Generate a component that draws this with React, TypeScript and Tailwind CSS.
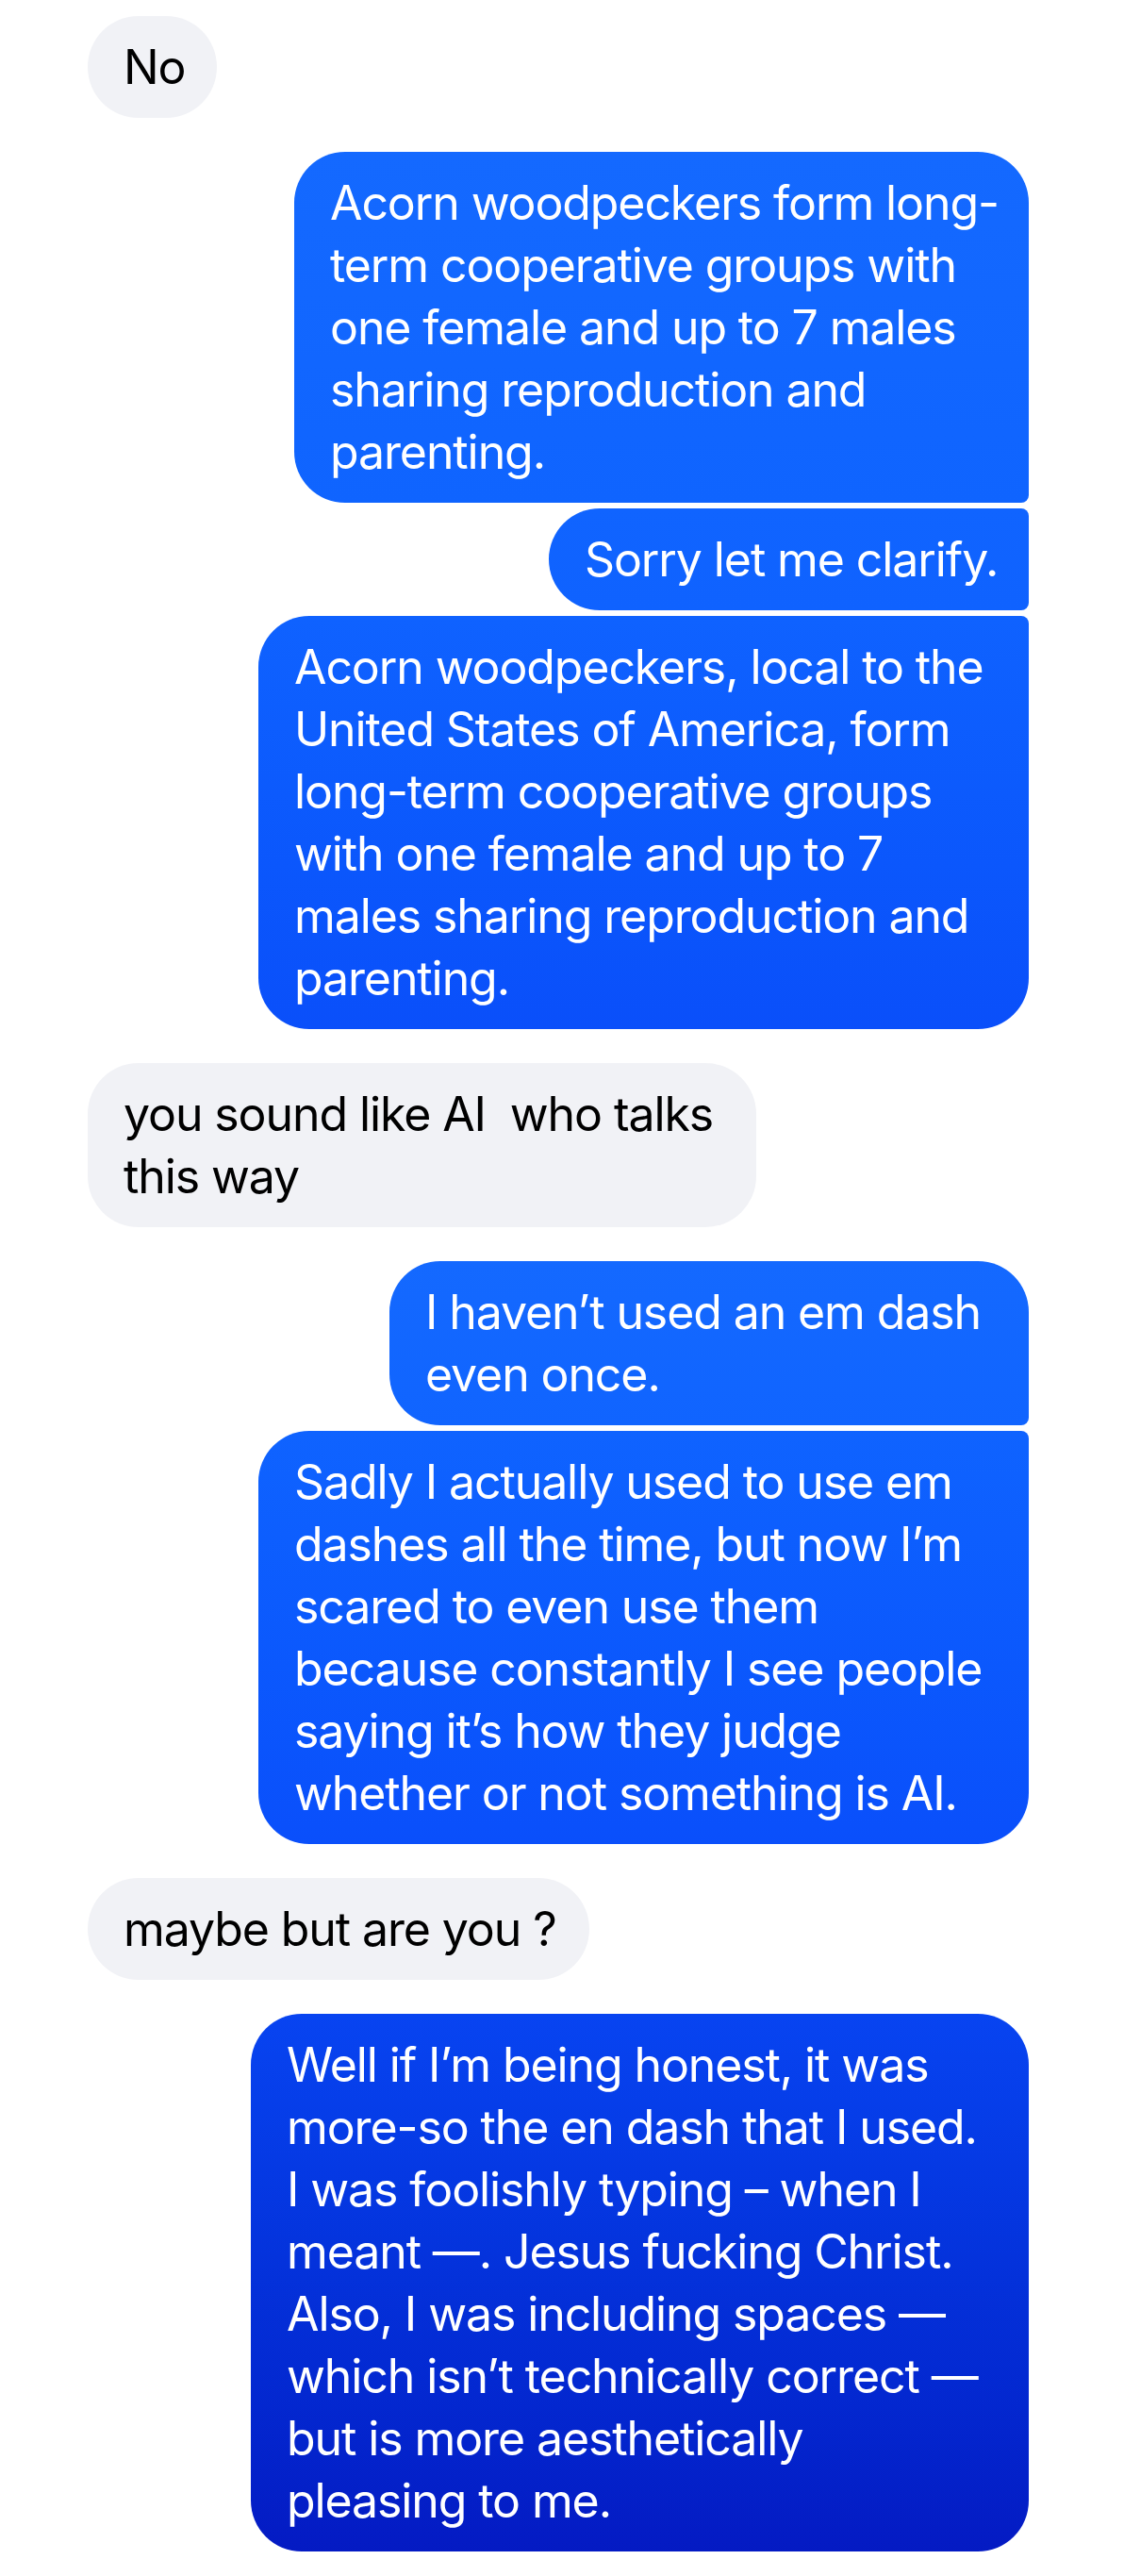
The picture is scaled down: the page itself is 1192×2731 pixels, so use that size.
import React from "react";

type Msg = {
  lines: string[];
  side: "in" | "out";
  cls: string;
  gapTop: string;
};

const messages: Msg[] = [
  {
    lines: ["No"],
    side: "in",
    cls: "w-[137px] rounded-[54px]",
    gapTop: "mt-[17px]",
  },
  {
    lines: [
      "Acorn woodpeckers form long-",
      "term cooperative groups with",
      "one female and up to 7 males",
      "sharing reproduction and",
      "parenting.",
    ],
    side: "out",
    cls: "w-[779px] rounded-[54px] rounded-br-[8px] bg-linear-to-b from-[#1469ff] to-[#0f64ff]",
    gapTop: "mt-[36px]",
  },
  {
    lines: ["Sorry let me clarify."],
    side: "out",
    cls: "w-[509px] rounded-[54px] rounded-tr-[8px] rounded-br-[8px] bg-linear-to-b from-[#1064ff] to-[#0f62ff]",
    gapTop: "mt-[6px]",
  },
  {
    lines: [
      "Acorn woodpeckers, local to the",
      "United States of America, form",
      "long-term cooperative groups",
      "with one female and up to 7",
      "males sharing reproduction and",
      "parenting.",
    ],
    side: "out",
    cls: "w-[817px] rounded-[54px] rounded-tr-[8px] bg-linear-to-b from-[#0f62ff] to-[#0a4ffa]",
    gapTop: "mt-[6px]",
  },
  {
    lines: ["you sound like AI  who talks", "this way"],
    side: "in",
    cls: "w-[709px] rounded-[54px]",
    gapTop: "mt-[36px]",
  },
  {
    lines: ["I haven’t used an em dash", "even once."],
    side: "out",
    cls: "w-[678px] rounded-[54px] rounded-br-[8px] bg-linear-to-b from-[#1469ff] to-[#1064ff]",
    gapTop: "mt-[36px]",
  },
  {
    lines: [
      "Sadly I actually used to use em",
      "dashes all the time, but now I’m",
      "scared to even use them",
      "because constantly I see people",
      "saying it’s how they judge",
      "whether or not something is AI.",
    ],
    side: "out",
    cls: "w-[817px] rounded-[54px] rounded-tr-[8px] bg-linear-to-b from-[#0f63ff] to-[#0a4ffb]",
    gapTop: "mt-[6px]",
  },
  {
    lines: ["maybe but are you ?"],
    side: "in",
    cls: "w-[532px] rounded-[54px]",
    gapTop: "mt-[36px]",
  },
  {
    lines: [
      "Well if I’m being honest, it was",
      "more-so the en dash that I used.",
      "I was foolishly typing – when I",
      "meant —. Jesus fucking Christ.",
      "Also, I was including spaces —",
      "which isn’t technically correct —",
      "but is more aesthetically",
      "pleasing to me.",
    ],
    side: "out",
    cls: "w-[825px] rounded-[54px] bg-linear-to-b from-[#0844f1] to-[#041ac3]",
    gapTop: "mt-[36px]",
  },
];

function Bubble({ m }: { m: Msg }) {
  const base =
    "px-[38px] py-[21px] text-[50px] leading-[66px] tracking-[-0.022em]";
  const color =
    m.side === "in" ? "bg-[#f1f2f6] text-black" : "text-white";
  return (
    <div
      className={`flex ${m.side === "in" ? "justify-start" : "justify-end"} ${m.gapTop}`}
    >
      <div className={`${base} ${color} ${m.cls}`}>
        {m.lines.map((l, i) => (
          <span key={i} className="block whitespace-pre">
            {l}
          </span>
        ))}
      </div>
    </div>
  );
}

export default function App() {
  return (
    <div
      className="min-h-[2731px] w-[1192px] bg-white pl-[93px] pr-[101px] pb-[27px] antialiased"
      style={{ fontFamily: "Inter, 'Noto Sans', 'Liberation Sans', sans-serif" }}
    >
      <div className="flex flex-col pt-px -mt-px">
        {messages.map((m, i) => (
          <Bubble key={i} m={m} />
        ))}
      </div>
    </div>
  );
}
